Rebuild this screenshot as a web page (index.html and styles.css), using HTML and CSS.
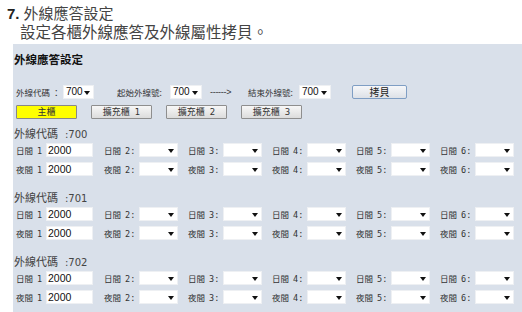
FILE: index.html
```html
<!DOCTYPE html>
<html lang="zh-Hant">
<head>
<meta charset="utf-8">
<link rel="stylesheet" href="styles.css">
</head>
<body>
<header class="doc">
  <h1 class="h1"><span class="num">7.</span>外線應答設定</h1>
  <p class="sub">設定各櫃外線應答及外線屬性拷貝。</p>
</header>
<section class="panel">
  <h2 class="ptitle">外線應答設定</h2>
  <div class="row1">
    <span class="lbl w-l1">外線代碼 ：</span><span class="sel w-s1">700</span>
    <span class="lbl w-l2">起始外線號:</span><span class="sel w-s2">700</span>
    <span class="arrow">------&gt;</span>
    <span class="lbl w-l3">結束外線號:</span><span class="sel w-s2">700</span>
    <button class="btn copy">拷貝</button>
  </div>
  <div class="tabs">
    <button class="btn tab main">主櫃</button>
    <button class="btn tab">擴充櫃<i>1</i></button>
    <button class="btn tab">擴充櫃<i>2</i></button>
    <button class="btn tab">擴充櫃<i>3</i></button>
  </div>

  <div class="group">
    <div class="ghead">外線代碼<span class="gnum">:700</span></div>
    <div class="grid">
      <span class="cell first"><span class="clbl">日間<i>1</i></span><span class="inp">2000</span></span>
      <span class="cell"><span class="clbl">日間<i>2:</i></span><span class="sel w-c"></span></span>
      <span class="cell"><span class="clbl">日間<i>3:</i></span><span class="sel w-c"></span></span>
      <span class="cell"><span class="clbl">日間<i>4:</i></span><span class="sel w-c"></span></span>
      <span class="cell"><span class="clbl">日間<i>5:</i></span><span class="sel w-c"></span></span>
      <span class="cell"><span class="clbl">日間<i>6:</i></span><span class="sel w-c"></span></span>
      <span class="cell first"><span class="clbl">夜間<i>1</i></span><span class="inp">2000</span></span>
      <span class="cell"><span class="clbl">夜間<i>2:</i></span><span class="sel w-c"></span></span>
      <span class="cell"><span class="clbl">夜間<i>3:</i></span><span class="sel w-c"></span></span>
      <span class="cell"><span class="clbl">夜間<i>4:</i></span><span class="sel w-c"></span></span>
      <span class="cell"><span class="clbl">夜間<i>5:</i></span><span class="sel w-c"></span></span>
      <span class="cell"><span class="clbl">夜間<i>6:</i></span><span class="sel w-c"></span></span>
    </div>
  </div>

  <div class="group">
    <div class="ghead">外線代碼<span class="gnum">:701</span></div>
    <div class="grid">
      <span class="cell first"><span class="clbl">日間<i>1</i></span><span class="inp">2000</span></span>
      <span class="cell"><span class="clbl">日間<i>2:</i></span><span class="sel w-c"></span></span>
      <span class="cell"><span class="clbl">日間<i>3:</i></span><span class="sel w-c"></span></span>
      <span class="cell"><span class="clbl">日間<i>4:</i></span><span class="sel w-c"></span></span>
      <span class="cell"><span class="clbl">日間<i>5:</i></span><span class="sel w-c"></span></span>
      <span class="cell"><span class="clbl">日間<i>6:</i></span><span class="sel w-c"></span></span>
      <span class="cell first"><span class="clbl">夜間<i>1</i></span><span class="inp">2000</span></span>
      <span class="cell"><span class="clbl">夜間<i>2:</i></span><span class="sel w-c"></span></span>
      <span class="cell"><span class="clbl">夜間<i>3:</i></span><span class="sel w-c"></span></span>
      <span class="cell"><span class="clbl">夜間<i>4:</i></span><span class="sel w-c"></span></span>
      <span class="cell"><span class="clbl">夜間<i>5:</i></span><span class="sel w-c"></span></span>
      <span class="cell"><span class="clbl">夜間<i>6:</i></span><span class="sel w-c"></span></span>
    </div>
  </div>

  <div class="group">
    <div class="ghead">外線代碼<span class="gnum">:702</span></div>
    <div class="grid">
      <span class="cell first"><span class="clbl">日間<i>1</i></span><span class="inp">2000</span></span>
      <span class="cell"><span class="clbl">日間<i>2:</i></span><span class="sel w-c"></span></span>
      <span class="cell"><span class="clbl">日間<i>3:</i></span><span class="sel w-c"></span></span>
      <span class="cell"><span class="clbl">日間<i>4:</i></span><span class="sel w-c"></span></span>
      <span class="cell"><span class="clbl">日間<i>5:</i></span><span class="sel w-c"></span></span>
      <span class="cell"><span class="clbl">日間<i>6:</i></span><span class="sel w-c"></span></span>
      <span class="cell first"><span class="clbl">夜間<i>1</i></span><span class="inp">2000</span></span>
      <span class="cell"><span class="clbl">夜間<i>2:</i></span><span class="sel w-c"></span></span>
      <span class="cell"><span class="clbl">夜間<i>3:</i></span><span class="sel w-c"></span></span>
      <span class="cell"><span class="clbl">夜間<i>4:</i></span><span class="sel w-c"></span></span>
      <span class="cell"><span class="clbl">夜間<i>5:</i></span><span class="sel w-c"></span></span>
      <span class="cell"><span class="clbl">夜間<i>6:</i></span><span class="sel w-c"></span></span>
    </div>
  </div>
</section>
</body>
</html>
```
FILE: styles.css
```css
html, body {
  margin: 0;
  padding: 0;
  background: #ffffff;
}
body {
  font-family: "Liberation Sans", "Noto Sans CJK TC", sans-serif;
  color: #333333;
  height: 312px;
  overflow: hidden;
}
.doc {
  padding: 4px 0 0 7px;
}
.h1 {
  margin: 0;
  font-weight: normal;
  font-size: 15px;
  line-height: 19px;
  color: #444444;
}
.num {
  font-weight: bold;
  color: #222222;
  margin-right: 4px;
}
.sub {
  margin: 0 0 0 13px;
  font-size: 15.5px;
  line-height: 19px;
  color: #444444;
}
.panel {
  margin: 2px 0 0 13px;
  background: #d9e0ea;
  padding: 7px 0 20px 3px;
}
.ptitle {
  margin: 0 0 18px -2px;
  font-size: 11.5px;
  line-height: 16px;
  font-weight: bold;
  color: #111111;
  font-family: "Noto Sans CJK TC", sans-serif;
}
.row1 {
  display: flex;
  align-items: center;
  height: 14px;
}
.lbl {
  font-family: "Noto Sans CJK TC", sans-serif;
  font-size: 8.5px;
  color: #333333;
  white-space: nowrap;
}
.w-l1 { width: 47px; }
.w-l2 { width: 53px; margin-left: 23px; }
.w-l3 { width: 51px; margin-left: 9px; }
.arrow {
  margin-left: 8px;
  width: 29px;
  font-size: 9px;
  color: #333333;
  letter-spacing: -0.3px;
}
.sel {
  position: relative;
  display: inline-block;
  box-sizing: border-box;
  height: 14px;
  background: #ffffff;
  border: 1px solid #eef0f3;
  font-size: 10px;
  line-height: 12px;
  padding-left: 2px;
  color: #111111;
}
.sel::after {
  content: "";
  position: absolute;
  right: 3px;
  top: 5px;
  border-left: 3px solid transparent;
  border-right: 3px solid transparent;
  border-top: 4px solid #111111;
}
.w-s1 { width: 31px; }
.w-s2 { width: 32px; }
.w-c { width: 39px; }
.btn {
  box-sizing: border-box;
  height: 14px;
  margin: 0;
  padding: 0;
  font-family: "Noto Sans CJK TC", "Liberation Sans", sans-serif;
  font-size: 9px;
  line-height: 12px;
  color: #333333;
  border: 1px solid #8e8e8e;
  border-radius: 1px;
  background: linear-gradient(#f7f7f7, #dcdcdc);
}
.btn i {
  font-style: normal;
  font-family: "DejaVu Sans", sans-serif;
  font-size: 8.5px;
  margin-left: 5px;
}
.copy {
  margin-left: 21px;
  width: 55px;
  font-size: 10px;
  color: #222222;
  border-color: #7f9ec4;
  border-radius: 2px;
  background: linear-gradient(#f6f7f9, #dde1e7);
}
.tabs {
  display: flex;
  gap: 14px;
  margin-top: 6px;
  height: 14px;
}
.tab { width: 61px; }
.main {
  background: #ffff00;
  border-color: #888888;
}
.group {
  margin-top: 6px;
}
.group + .group {
  margin-top: 13px;
}
.ghead {
  margin-left: -2px;
  height: 16px;
  line-height: 16px;
  font-family: "Noto Sans CJK TC", sans-serif;
  font-size: 11px;
  color: #444444;
}
.gnum {
  font-family: "DejaVu Sans", sans-serif;
  font-size: 10px;
  margin-left: 7px;
}
.grid {
  margin-top: 2px;
  display: grid;
  grid-template-columns: 88px repeat(5, 84px);
  row-gap: 5px;
}
.cell {
  display: flex;
  align-items: center;
  height: 14px;
}
.clbl {
  width: 35px;
  font-family: "Noto Sans CJK TC", sans-serif;
  font-size: 8.5px;
  color: #333333;
  white-space: nowrap;
}
.first .clbl { width: 30px; }
.clbl i {
  font-style: normal;
  font-family: "DejaVu Sans Mono", monospace;
  font-size: 8.5px;
  margin-left: 4px;
}
.inp {
  box-sizing: border-box;
  width: 47px;
  height: 14px;
  background: #ffffff;
  border: 1px solid #eef0f3;
  font-size: 10.5px;
  line-height: 12px;
  padding-left: 1px;
  color: #111111;
}
```
